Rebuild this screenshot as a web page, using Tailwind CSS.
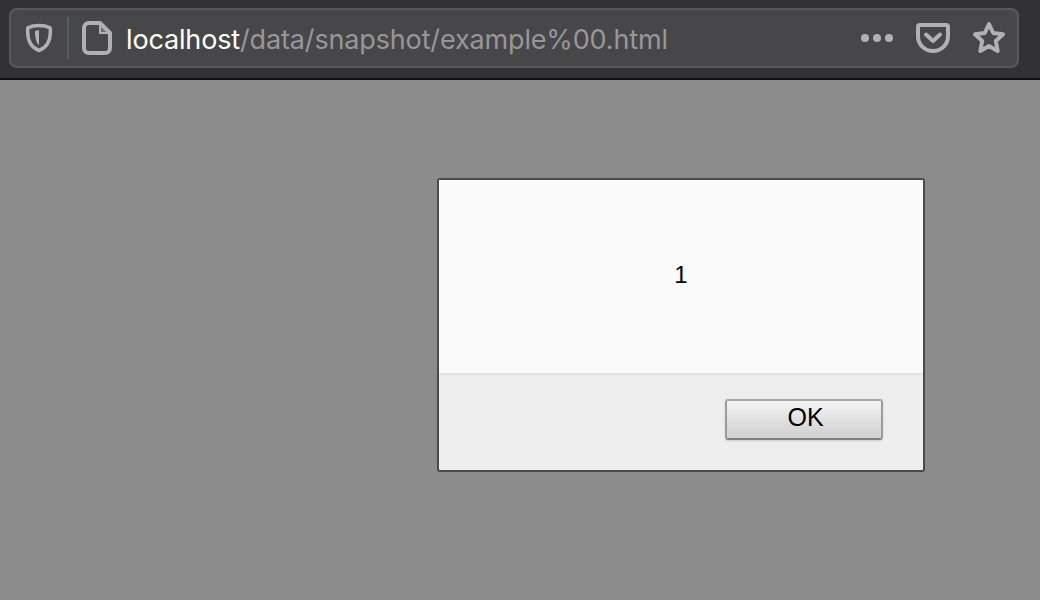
<!DOCTYPE html>
<html lang="en">
  <head>
    <meta charset="UTF-8" />
    <title>localhost</title>
    <script src="https://cdn.jsdelivr.net/npm/@tailwindcss/browser@4"></script>
  </head>
  <body class="w-[1040px] h-[600px] overflow-hidden bg-[#8c8c8c] font-['Liberation_Sans',sans-serif]">
    <!-- browser toolbar -->
    <div class="h-[80px] bg-[#323234] border-b-2 border-[#0f0f10] pt-[8px] pl-[9px] pr-[21px]">
      <div class="h-[60px] flex items-center bg-[#474749] border-2 border-[#59595b] rounded-[8px]">
        <svg class="w-[28px] h-[30px] ml-[14px] text-[#b1b1b3]" viewBox="0 0 28 30" fill="none" stroke="currentColor">
          <path d="M14 2.500C10 2.500 6 3.300 2.800 4.800C2 14 3.500 23.500 14 27.500C24.500 23.500 26 14 25.200 4.800C22 3.300 18 2.500 14 2.500Z" stroke-width="3.500" stroke-linejoin="round" />
          <path d="M14 7L10 8C10 13 10.500 19 14 22.500Z" fill="currentColor" stroke="none" />
        </svg>
        <div class="w-[2px] h-[42px] ml-[14px] bg-[#565b66]"></div>
        <svg class="w-[30px] h-[34px] ml-[13px] text-[#b1b1b3]" viewBox="0 0 30 34" fill="none" stroke="currentColor" stroke-width="4" stroke-linejoin="round">
          <path d="M7 2H18L28 12V27C28 30 26 32 23 32H7C4 32 2 30 2 27V7C2 4 4 2 7 2Z" />
          <path d="M18 3V12H27" stroke-width="2" fill="#b1b1b3" fill-opacity="0.35" />
        </svg>
        <div class="ml-[14px] mt-[2px] text-[27px] leading-none font-['Inter',sans-serif] tracking-[-0.15px] text-[#97979a]">
          <span class="text-white">localhost</span>/data/snapshot/example%00.html
        </div>
        <svg class="w-[34px] h-[10px] ml-auto text-[#b1b1b3]" viewBox="0 0 34 10" fill="currentColor">
          <circle cx="5" cy="5" r="4" />
          <circle cx="17" cy="5" r="4" />
          <circle cx="29" cy="5" r="4" />
        </svg>
        <svg class="w-[34px] h-[30px] ml-[22px] text-[#b1b1b3]" viewBox="0 0 34 30" fill="none" stroke="currentColor" stroke-linecap="round" stroke-linejoin="round">
          <path d="M4 2H30C31.500 2 32 2.500 32 4V13C32 22 25 28 17 28C9 28 2 22 2 13V4C2 2.500 2.500 2 4 2Z" stroke-width="4" />
          <path d="M10 11.500L17 18L24 11.500" stroke-width="4" />
        </svg>
        <svg class="w-[34px] h-[34px] ml-[22px] mr-[11px] text-[#b1b1b3]" viewBox="0 0 34 34" fill="none" stroke="currentColor" stroke-width="4" stroke-linejoin="round">
          <path d="M17 3L21.200 12L31 13.300L23.800 20L25.700 30L17 25L8.300 30L10.200 20L3 13.300L12.800 12Z" />
        </svg>
      </div>
    </div>

    <!-- alert dialog -->
    <div class="pt-[98px] pl-[437px]">
      <div class="w-[488px] h-[294px] flex flex-col bg-[#eeeeee] border-2 border-[#4a4a4a] rounded-[3px]">
        <div class="h-[195px] shrink-0 flex items-center justify-center pb-[3px] bg-[#fafafa] border-b-2 border-[#e2e2e2] text-[24px] text-black">1</div>
        <div class="flex-1 flex items-start justify-end pt-[24px] pr-[40px]">
          <button class="w-[158px] h-[41px] pb-[4px] pl-[3px] rounded-[3px] border-2 border-t-[#a6a6a6] border-x-[#9c9c9c] border-b-[#808080] bg-gradient-to-b from-[#f4f4f4] to-[#cfcfcf] shadow-[0_1px_2px_rgba(0,0,0,0.15)] text-[25px] leading-none text-black">OK</button>
        </div>
      </div>
    </div>
  </body>
</html>
